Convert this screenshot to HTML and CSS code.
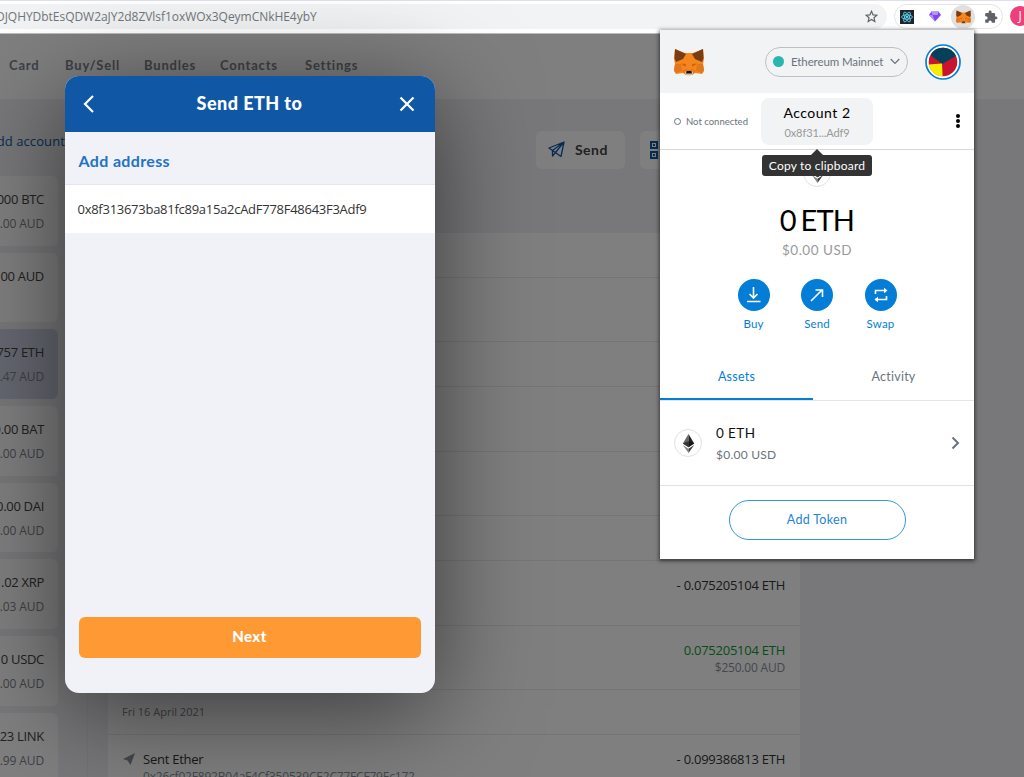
FILE: index.html
```
<!DOCTYPE html>
<html lang="en">
<head>
  <meta charset="UTF-8" />
  <meta name="viewport" content="width=device-width, initial-scale=1.0" />
  <title>Send ETH</title>
  <link rel="stylesheet" href="styles.css">
</head>
<body>
  <svg width="0" height="0" class="defs">
    <symbol id="fox" viewBox="0 0 30 28">
      <path fill="#f6851b" d="M1 1 11 5h8L29 1l1 10-1 5 1 7-2 3-7-1-3 2h-6l-3-2-7 1-2-3 1-7-1-5z"/>
      <path fill="#e2761b" d="M1 16h6l1 7-6 2-2-3zM29 16h-6l-1 7 6 2 2-3z"/>
      <path fill="#763d16" d="M1 1 12 6 9 11 2 14 .5 10zM29 1 18 6l3 5 7 3 1.500-4z"/>
      <path fill="#cd6116" d="M7 15.500l5 .5-.5 3zM23 15.500l-5 .5.5 3z"/>
      <path fill="#e4761b" d="M8 23l4-2 3 1 3-1 4 2-4 4h-6z"/>
      <path fill="#d7c1b3" d="M11 24l1-1h6l1 1v2l-2 1.500h-4L11 26z"/>
      <path fill="#161616" d="M12.500 23h5l.5 2.500h-6z"/>
    </symbol>
    <symbol id="eth" viewBox="0 0 12 20">
      <path fill="#666" d="M6 0 0 10l6 4z"/>
      <path fill="#222" d="M6 0l6 10-6 4z"/>
      <path fill="#111" d="M0 10l6-2.500 6 2.500-6 4z" opacity=".6"/>
      <path fill="#888" d="M0 11.500 6 20v-4.500z"/>
      <path fill="#3c3c3b" d="M12 11.500 6 20v-4.500z"/>
    </symbol>
  </svg>

  <div class="browser">
    <div class="omnibox">
      <span class="url">DJQHYDbtEsQDW2aJY2d8ZVlsf1oxWOx3QeymCNkHE4ybY</span>
      <svg class="star" width="13" height="13" viewBox="0 0 24 24"><path d="M12 2.500l2.900 6.400 7 .7-5.300 4.700 1.500 6.900-6.100-3.600-6.100 3.600 1.500-6.900L2.100 9.600l7-.7z"/></svg>
    </div>
    <div class="extensions">
      <span class="ext"><svg width="14" height="14" viewBox="0 0 28 28">
        <path fill="#20232a" d="M0 0h28v28H0z"/>
        <g fill="none" stroke="#61dafb" stroke-width="1.700"><ellipse cx="14" cy="14" rx="11" ry="4.300"/><ellipse cx="14" cy="14" rx="11" ry="4.300" transform="rotate(60 14 14)"/><ellipse cx="14" cy="14" rx="11" ry="4.300" transform="rotate(120 14 14)"/></g>
        <circle cx="14" cy="14" r="2.300" fill="#61dafb"/></svg></span>
      <span class="ext"><svg width="12" height="11" viewBox="0 0 24 22"><path fill="#8247f5" d="M5 1h14l5 7-12 13L0 8z"/><path fill="#b694ff" d="M5 1h14l-2 7H7zM0 8h7l5 13z"/></svg></span>
      <span class="ext ext-active"><svg width="15" height="14"><use href="#fox"/></svg></span>
      <span class="ext"><svg width="14" height="14" viewBox="0 0 24 24"><path fill="#5f6368" d="M20.500 11H19V7a2 2 0 0 0-2-2h-4V3.500a2.500 2.500 0 0 0-5 0V5H4a2 2 0 0 0-2 2v3.800h1.500a2.700 2.700 0 0 1 0 5.400H2V20a2 2 0 0 0 2 2h3.800v-1.500a2.700 2.700 0 0 1 5.400 0V22H17a2 2 0 0 0 2-2v-4h1.500a2.500 2.500 0 0 0 0-5z"/></svg></span>
    </div>
    <div class="profile">J</div>
  </div>

  <div class="app">
    <nav class="nav">
      <a class="nav-card">Card</a>
      <a class="nav-buy">Buy/Sell</a>
      <a class="nav-bundles">Bundles</a>
      <a class="nav-contacts">Contacts</a>
      <a class="nav-settings">Settings</a>
    </nav>
    <div class="content">
      <aside class="sidebar">
        <div class="add-account"><span>dd account</span></div>
        <div class="card"><span class="coin">000 BTC</span><span class="fiat">.00 AUD</span></div>
        <div class="card"><span class="coin">00 AUD</span></div>
        <div class="card selected"><span class="coin">757 ETH</span><span class="fiat">.47 AUD</span></div>
        <div class="card"><span class="coin">0.00 BAT</span><span class="fiat">.00 AUD</span></div>
        <div class="card"><span class="coin">0.00 DAI</span><span class="fiat">.00 AUD</span></div>
        <div class="card"><span class="coin">.02 XRP</span><span class="fiat">.03 AUD</span></div>
        <div class="card"><span class="coin">0 USDC</span><span class="fiat">.00 AUD</span></div>
        <div class="card"><span class="coin">23 LINK</span><span class="fiat">.99 AUD</span></div>
      </aside>
      <main class="main">
        <div class="actions">
          <div class="action">
            <svg width="17" height="17" viewBox="0 0 17 17" fill="none" stroke="#0f59a8" stroke-width="1.300" stroke-linejoin="round"><path d="M16 1 1 7l3.500 2.500L13 15.500zM16 1 4.500 9.500V15l3-3.500zM16 1 7.500 11.500"/></svg>
            <span>Send</span>
          </div>
          <div class="action receive">
            <svg width="20" height="18" viewBox="0 0 20 18" fill="none" stroke="#0f59a8" stroke-width="2"><path d="M1 1h6v6H1zM1 11h6v6H1zM11 1h6v6h-6z"/><path stroke="none" fill="#0f59a8" d="M3 3h2v2H3zM3 13h2v2H3z"/></svg>
          </div>
        </div>
        <div class="list">
          <div class="day"></div>
          <div class="tx"></div>
          <div class="day"></div>
          <div class="tx"></div>
          <div class="tx"></div>
          <div class="day"></div>
          <div class="tx"><div class="amount">- 0.075205104 ETH</div></div>
          <div class="tx"><div class="amount in">0.075205104 ETH<small>$250.00 AUD</small></div></div>
          <div class="day">Fri 16 April 2021</div>
          <div class="tx">
            <svg class="plane" width="12" height="12" viewBox="0 0 12 12"><path fill="#8a8f98" d="M12 0 0 6l4.500 1.500L7.500 12z"/></svg>
            <div class="name">Sent Ether<small>0x26cf02F892B04aF4Cf350539CE2C77FCF79Ec172</small></div>
            <div class="amount">- 0.099386813 ETH</div>
          </div>
        </div>
      </main>
    </div>
    <div class="overlay"></div>
  </div>

  <div class="modal">
    <div class="modal-head">
      <svg width="12" height="20" viewBox="0 0 12 20"><path d="M10 2 2 10l8 8"/></svg>
      <h2>Send ETH to</h2>
      <svg width="16" height="16" viewBox="0 0 16 16"><path d="M1.500 1.500l13 13M14.500 1.500l-13 13"/></svg>
    </div>
    <div class="add-address"><span>Add address</span></div>
    <div class="address"><span>0x8f313673ba81fc89a15a2cAdF778F48643F3Adf9</span></div>
    <button class="next">Next</button>
  </div>

  <div class="wallet">
    <div class="wallet-head">
      <svg width="30" height="28"><use href="#fox"/></svg>
      <div class="network">
        <i></i><span>Ethereum Mainnet</span>
        <svg width="10" height="7" viewBox="0 0 10 7"><path d="M.7 1 5 5.500 9.300 1"/></svg>
      </div>
      <svg class="avatar" width="36" height="36" viewBox="0 0 36 36">
        <circle cx="18" cy="18" r="17" fill="#fff" stroke="#037dd6" stroke-width="1.700"/>
        <circle cx="18" cy="18" r="14.300" fill="#c8142f"/>
        <path fill="#03405c" d="M17 20 31 12A14.300 14.300 0 0 0 5.500 11z"/>
        <path fill="#f5ee00" d="M3.700 20.500 17 19.500l.6 12.800A14.300 14.300 0 0 1 3.700 20.500z"/>
      </svg>
    </div>
    <div class="account-bar">
      <div class="status"><i></i><span>Not connected</span></div>
      <div class="account">
        <div class="account-name">Account 2</div>
        <div class="account-address">0x8f31...Adf9</div>
        <div class="tooltip"><span>Copy to clipboard</span></div>
      </div>
      <svg class="dots" width="4" height="14" viewBox="0 0 4 14"><circle cx="2" cy="2" r="2"/><circle cx="2" cy="7" r="2"/><circle cx="2" cy="12" r="2"/></svg>
    </div>
    <div class="overview">
      <div class="token-icon"><svg width="13" height="19"><use href="#eth"/></svg></div>
      <div class="balance">0 ETH</div>
      <div class="balance-fiat">$0.00 USD</div>
      <div class="wallet-buttons">
        <div class="wallet-button"><b><svg width="16" height="16" viewBox="0 0 16 16"><path d="M7.500 0v10.500M3.500 7l4 4 4-4M1 14.500h13.500"/></svg></b><span>Buy</span></div>
        <div class="wallet-button"><b><svg width="16" height="16" viewBox="0 0 16 16"><path d="M2 14 13.500 2.500M6.500 3h7v7"/></svg></b><span>Send</span></div>
        <div class="wallet-button"><b><svg width="16" height="16" viewBox="0 0 16 16"><path d="M2.500 7V3.500h10M2 12.500h11.500V9"/><path class="solid" d="M11 .8l3.500 2.700L11 6.200zM5 9.800 1.500 12.500 5 15.200z"/></svg></b><span>Swap</span></div>
      </div>
    </div>
    <div class="tabs">
      <div class="tab active">Assets</div>
      <div class="tab">Activity</div>
    </div>
    <div class="asset">
      <div class="token-icon"><svg width="13" height="19"><use href="#eth"/></svg></div>
      <div class="asset-text"><div class="asset-amount">0 ETH</div><div class="asset-fiat">$0.00 USD</div></div>
      <svg class="chevron" width="9" height="14" viewBox="0 0 9 14"><path d="M1.500 1.500 7 7l-5.500 5.500"/></svg>
    </div>
    <div class="add-token"><button>Add Token</button></div>
  </div>
</body>
</html>
```
FILE: styles.css
```
* { box-sizing: border-box; }
body { margin: 0; width: 1024px; height: 777px; overflow: hidden; position: relative; font-family: "Open Sans", sans-serif; background: #fff; }
.defs { position: absolute; }

/* browser bar */
.browser { height: 34px; padding-top: 4px; display: flex; overflow: hidden; border-bottom: 1px solid #bbb; background: linear-gradient(#dfe0ec 1px, #fff 1px); }
.omnibox { width: 887px; height: 25px; flex: none; display: flex; align-items: center; justify-content: space-between; padding-right: 9px; background: #f1f3f4; border-radius: 0 13px 13px 0; }
.url { margin-left: -4px; font-size: 12px; letter-spacing: -0.04px; color: #72767a; white-space: nowrap; }
.star path { fill: none; stroke: #5f6368; stroke-width: 2.2; }
.extensions { width: 109px; height: 25px; flex: none; margin-left: 7px; display: flex; align-items: center; border: 1px solid #e8e3e5; border-radius: 13px; }
.ext { width: 32px; height: 24px; display: flex; align-items: center; justify-content: center; flex: none; }
.ext:first-child { width: 24px; }
.ext-active { width: 24px; border-radius: 50%; background: #e0e0e0; }
.profile { width: 20px; height: 20px; margin: 2px 0 0 7px; flex: none; border-radius: 50%; background: #ec407a; color: #fff; font: 12px/20px "Open Sans", sans-serif; text-align: center; }

/* wallet site behind the dialog */
.app { position: relative; height: 743px; overflow: hidden; background: #f0f1f4; }
.overlay { position: absolute; inset: 0; background: rgba(0, 0, 0, .5); }
.nav { height: 65px; padding: 0 0 4px 9px; display: flex; align-items: center; background: #fff; font: 700 13px "Lato", sans-serif; letter-spacing: .8px; color: #7a8490; }
.nav a { flex: none; }
.nav-card { width: 56px; }
.nav-buy { width: 79px; }
.nav-bundles { width: 76px; }
.nav-contacts { width: 85px; }
.content { display: flex; }
.sidebar { width: 88px; flex: none; border-right: 1px solid #e8e9ee; }
.add-account { height: 77px; display: flex; align-items: center; justify-content: flex-end; width: 65px; color: #0f59a8; font-size: 13px; white-space: nowrap; }
.add-account span { margin-top: 7px; letter-spacing: .1px; }
.card { width: 58px; height: 69.700px; margin-bottom: 7px; padding: 12px 14px 0 0; display: flex; flex-direction: column; align-items: flex-end; background: #fff; border-radius: 0 6px 6px 0; white-space: nowrap; }
.selected { background: #cdd0e4; }
.coin { font-size: 13px; line-height: 22px; letter-spacing: -.3px; color: #444; }
.fiat { font-size: 12px; line-height: 20px; margin-top: 4px; letter-spacing: -.1px; color: #7d838d; }
.main { width: 692px; margin-left: 20px; }
.actions { height: 134px; padding-top: 32px; display: flex; justify-content: flex-end; gap: 15px; }
.action { width: 89px; height: 38px; padding: 0 0 2px 12px; display: flex; align-items: center; gap: 10px; background: #fff; border-radius: 6px; font: 700 14px "Lato", sans-serif; letter-spacing: .45px; color: #444; }
.action svg { margin-top: 1px; }
.receive { width: 160px; padding-left: 10px; }
.list { background: #fff; }
.day { height: 45px; padding: 0 14px; line-height: 44px; border-bottom: 1px solid #e9eaee; font-size: 11px; letter-spacing: 0; color: #7d838d; }
.tx { height: 64.400px; padding: 13px 15px 0; display: flex; border-bottom: 1px solid #e9eaee; }
.plane { margin: 5px 8px 0 0; }
.name, .amount { font-size: 13px; line-height: 22px; letter-spacing: -.25px; color: #333; }
.name small, .amount small { display: block; font-size: 12px; line-height: 14px; letter-spacing: -.2px; color: #8a8f98; }
.amount { margin-left: auto; text-align: right; }
.in { color: #0c9a34; }

/* send dialog */
.modal { position: absolute; left: 64.500px; top: 76px; width: 370px; height: 617px; overflow: hidden; border-radius: 14px; background: #f0f2f8; box-shadow: 0 18px 100px rgba(0, 0, 0, .55); font-family: "Lato", sans-serif; }
.modal-head { height: 56px; padding: 0 20px 0 18px; display: flex; align-items: center; justify-content: space-between; background: #1058a5; }
.modal-head path { fill: none; stroke: #fff; stroke-width: 2.2; }
.modal-head h2 { margin: 0 0 3px 6px; font-size: 18px; font-weight: 900; letter-spacing: .45px; color: #fff; }
.add-address { height: 53px; padding: 5px 14px 0; display: flex; align-items: center; border-bottom: 1px solid #e3e6f0; font-size: 16px; font-weight: 700; letter-spacing: .35px; color: #2472c3; }
.address { height: 48px; padding-left: 13px; display: flex; align-items: center; background: #fff; font: 13px "Open Sans", sans-serif; letter-spacing: -.27px; color: #333; }
.next { display: block; width: 342px; height: 41px; margin: 384px 14px 0; padding: 0 0 4px; border: 0; border-radius: 6px; background: #ff9933; color: #fff; font: 900 15px "Lato", sans-serif; letter-spacing: .4px; }

/* MetaMask popup */
.wallet { position: absolute; left: 660px; top: 30px; width: 314px; height: 529px; background: #fff; box-shadow: 0 1px 4px 1px rgba(0, 0, 0, .55); font-family: "Lato", sans-serif; }
.wallet-head { height: 63px; padding: 0 14px; display: flex; align-items: center; background: #f2f3f4; }
.wallet-head svg { flex: none; }
.network { width: 143px; height: 30px; flex: none; margin: 0 17px 0 61px; padding: 0 7px; display: flex; align-items: center; border: 1px solid #bbc0c5; border-radius: 15px; font-size: 11.500px; letter-spacing: -.1px; color: #6a737d; white-space: nowrap; }
.network i { width: 11px; height: 11px; margin-right: 7px; border-radius: 50%; background: #29b6af; }
.network svg { margin-left: auto; }
.network path { fill: none; stroke: #6a737d; stroke-width: 1.200; }
.account-bar { height: 57px; display: grid; grid-template-columns: 101px 112px 1fr; align-items: center; border-bottom: 1px solid #d6d9dc; }
.status { padding-left: 14px; display: flex; align-items: center; gap: 5px; font-size: 9.500px; color: #6a737d; white-space: nowrap; }
.status i { width: 7px; height: 7px; border: 1px solid #6a737d; border-radius: 50%; }
.account { position: relative; height: 47px; padding-top: 5px; border-radius: 8px; background: #f2f3f4; text-align: center; }
.account-name { font-size: 14px; line-height: 20px; letter-spacing: .5px; color: #000; }
.account-address { font-size: 11px; line-height: 20px; letter-spacing: -.1px; color: #989a9b; }
.tooltip { position: absolute; z-index: 1; left: 1px; top: 57px; width: 110px; height: 21px; display: flex; align-items: center; justify-content: center; border-radius: 3px; background: #333; color: #fff; font-size: 12px; line-height: 19px; letter-spacing: .2px; white-space: nowrap; }
.tooltip::before { content: ""; position: absolute; top: -6px; left: 49px; border: 6px solid transparent; border-top: 0; border-bottom-color: #333; }
.dots { justify-self: end; margin-right: 14px; }
.token-icon { width: 28px; height: 28px; flex: none; display: flex; align-items: center; justify-content: center; border: 1px solid #dfe1e3; border-radius: 50%; }
.overview { height: 204px; padding-top: 9px; display: flex; flex-direction: column; align-items: center; }
.balance { margin-top: 13px; font-size: 29px; line-height: 40px; letter-spacing: -.8px; word-spacing: -2px; color: #000; }
.balance-fiat { line-height: 20px; font-size: 13.500px; letter-spacing: .5px; color: #989a9b; }
.wallet-buttons { margin-top: 19px; display: flex; gap: 31.500px; }
.wallet-button { width: 32px; display: flex; flex-direction: column; align-items: center; font-size: 11.500px; line-height: 14px; letter-spacing: .15px; color: #037dd6; }
.wallet-button b { width: 32px; height: 32px; margin-bottom: 6px; display: flex; align-items: center; justify-content: center; border-radius: 50%; background: #037dd6; }
.wallet-button path { fill: none; stroke: #fff; stroke-width: 1.600; }
.wallet-button .solid { fill: #fff; stroke: none; }
.tabs { height: 47px; display: flex; border-bottom: 1px solid #e5e5e5; }
.tab { flex: 1; padding-top: 15px; text-align: center; font-size: 12.500px; line-height: 16px; letter-spacing: .25px; color: #6a737d; }
.tab.active { flex: none; width: 153px; border-bottom: 2px solid #037dd6; color: #037dd6; }
.asset { height: 85px; padding: 0 14px; display: flex; align-items: center; border-bottom: 1px solid #e0e2e4; }
.asset-text { margin: 2px 0 0 14px; }
.asset-amount { font-size: 13.500px; line-height: 22px; letter-spacing: .4px; color: #111; }
.asset-fiat { font-size: 12px; line-height: 22px; letter-spacing: .25px; color: #6a737d; }
.chevron { margin-left: auto; }
.chevron path { fill: none; stroke: #6a737d; stroke-width: 2; }
.add-token { padding-top: 14px; text-align: center; }
.add-token button { width: 177px; height: 40px; padding-bottom: 3px; border: 1px solid #3297e0; border-radius: 20px; background: #fff; color: #2484d8; font: 12.500px "Lato", sans-serif; letter-spacing: .3px; }
```
